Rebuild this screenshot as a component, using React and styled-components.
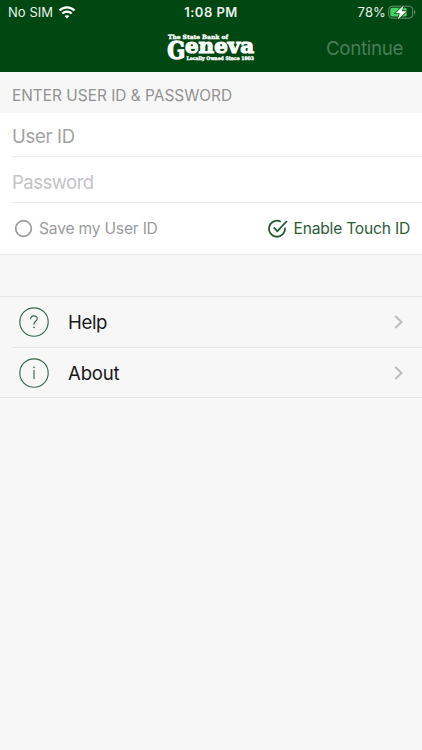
import React from 'react';
import styled, { createGlobalStyle } from 'styled-components';

const GlobalStyle = createGlobalStyle`
  * { box-sizing: border-box; }
  body { margin: 0; background: #f7f7f7; font-family: Inter, "Liberation Sans", sans-serif; }
`;

const Screen = styled.main`
  display: flex;
  flex-direction: column;
  width: 100%;
  max-width: 422px;
  height: 750px;
  background: #f7f7f7;
  overflow: hidden;
`;

const Header = styled.header`
  height: 72px;
  background: #004712;
  color: #fff;
`;

const StatusBar = styled.div`
  display: grid;
  grid-template-columns: 1fr auto 1fr;
  align-items: center;
  height: 24px;
  padding: 0 6px 0 8px;
  font-size: 13px;
  line-height: 24px;
  color: #e9f1ea;
`;

const StatusGroup = styled.div`
  display: flex;
  align-items: center;
  justify-content: ${(p) => (p.$end ? 'flex-end' : 'flex-start')};
  gap: ${(p) => (p.$end ? '2px' : '5px')};
  letter-spacing: ${(p) => (p.$end ? '0.15px' : '0.05px')};
`;

const Clock = styled.span`
  font-weight: 600;
  letter-spacing: 0.45px;
  margin-right: 2px;
`;

const NavBar = styled.nav`
  display: grid;
  grid-template-columns: 1fr 90px 1fr;
  align-items: center;
  height: 48px;
  padding-right: 19px;
  padding-left: 19px;
`;

const ContinueButton = styled.button`
  grid-column: 3;
  justify-self: end;
  border: 0;
  padding: 1px 0 0;
  background: none;
  font: 400 18.8px/24px Inter, sans-serif;
  letter-spacing: -0.35px;
  color: #4c7d58;
`;

const Logo = styled.svg`
  grid-column: 2;
  display: block;
`;

const SectionTitle = styled.h1`
  margin: 0;
  height: 41px;
  padding: 4px 12px 0;
  font-size: 15.4px;
  font-weight: 400;
  line-height: 39px;
  letter-spacing: 0.01px;
  color: #929292;
`;

const Form = styled.form`
  background: #fff;
  border-bottom: 1px solid #e6e6e6;
`;

const Field = styled.input`
  display: block;
  width: calc(100% - 12px);
  height: ${(p) => p.$height}px;
  margin-left: 12px;
  padding: ${(p) => p.$top}px 0 0;
  border: 0;
  border-bottom: 1px solid #e9e9e9;
  border-radius: 0;
  outline: 0;
  background: none;
  font: 400 18.5px/24px Inter, sans-serif;
  letter-spacing: ${(p) => p.$tracking}px;
  &::placeholder { color: ${(p) => p.$tone}; opacity: 1; }
`;

const Options = styled.div`
  display: flex;
  justify-content: space-between;
  height: 51px;
  padding: 0 12px 0 14px;
`;

const Option = styled.label`
  display: flex;
  align-items: center;
  gap: ${(p) => (p.$on ? '5px' : '6px')};
  font-size: 15.6px;
  letter-spacing: -0.2px;
  color: ${(p) => (p.$on ? '#2e5c39' : '#9b9b9b')};
`;

const Menu = styled.ul`
  margin: 41px 0 0;
  padding: 0;
  list-style: none;
  border-top: 1px solid #e5e5e5;
  border-bottom: 1px solid #e5e5e5;
`;

const MenuItem = styled.li`
  display: flex;
  align-items: center;
  height: 50px;
  margin-left: 12px;
  padding: 0 18px 0 7px;
  border-top: ${(p) => (p.$divided ? '1px solid #e5e5e5' : '0')};
`;

const MenuLabel = styled.span`
  flex: 1;
  margin-left: 19px;
  font-size: 18.6px;
  line-height: 24px;
  letter-spacing: ${(p) => p.$tracking}px;
  color: #191919;
`;

const Wifi = () => (
  <svg width="18" height="13" viewBox="0 0 17 13" fill="none" stroke="#fff" strokeWidth="2.3">
    <path d="M1 4.5C5.1.2 11.9.2 16 4.5" />
    <path d="M3.8 7.5c2.6-2.5 6.8-2.5 9.4 0" />
    <path d="M8.5 12.6 6.1 10.1c1.4-1.2 3.4-1.2 4.8 0Z" fill="#fff" stroke="none" />
  </svg>
);

const Battery = () => (
  <svg width="28" height="15" viewBox="0 0 28 15">
    <rect x=".7" y="1.2" width="24" height="12" rx="3.4" fill="none" stroke="#6c9275" />
    <path d="M26.2 5.1v4.2c1.6-.5 1.6-3.7 0-4.2Z" fill="#6c9275" />
    <rect x="2.3" y="2.8" width="16.5" height="8.8" rx="2" fill="#42d45d" />
    <path d="M15.8.2 7.3 8.2h4.5l-2 6.2 8.9-8.2h-4.8Z" fill="#fff" stroke="#004712" strokeWidth="1.4" paintOrder="stroke" />
  </svg>
);

const BankLogo = () => (
  <Logo width="90" height="32" viewBox="0 0 90 32" fill="#fff" stroke="#fff" fontFamily="'DejaVu Serif', serif" fontWeight="700" role="img" aria-label="The State Bank of Geneva">
    <text x="2" y="7" fontSize="5.8" strokeWidth=".35" textLength="60" lengthAdjust="spacingAndGlyphs">The State Bank of</text>
    <text x="1.2" y="26.9" fontSize="24" strokeWidth="1.3" textLength="18" lengthAdjust="spacingAndGlyphs">G</text>
    <text x="19" y="21.4" fontSize="20.5" strokeWidth="1.2" textLength="69" lengthAdjust="spacingAndGlyphs">eneva</text>
    <text x="20.5" y="28.2" fontSize="4.8" strokeWidth=".4" textLength="67.5" lengthAdjust="spacingAndGlyphs">Locally Owned Since 1903</text>
  </Logo>
);

const EmptyCircle = () => (
  <svg width="19" height="19" viewBox="0 0 19 19" fill="none" stroke="#999" strokeWidth="1.7">
    <circle cx="9.5" cy="9.5" r="7.8" />
  </svg>
);

const CheckedCircle = () => (
  <svg width="21" height="20" viewBox="0 0 21 20" fill="none" stroke="#245b32" strokeWidth="1.8">
    <path d="M13.8 2.7A8 8 0 1 0 17.9 8.6" />
    <path d="m6.7 8.4 3.7 3.7L19.9 2" />
  </svg>
);

const CircleGlyph = ({ kind }) => (
  <svg width="30" height="30" viewBox="0 0 30 30" fill="none" stroke="#37684a" strokeWidth="1.15">
    <circle cx="15" cy="15" r="14.2" />
    {kind === 'help' ? (
      <>
        <path d="M11.6 12.2c0-2.1 1.2-3.4 3.3-3.4s3.3 1.2 3.3 3c0 2.4-3.2 2.6-3.2 5v1" />
        <circle cx="15" cy="20.4" r=".8" fill="#37684a" stroke="none" />
      </>
    ) : (
      <>
        <path d="M15 12.1v8.9" />
        <circle cx="15" cy="9.4" r=".8" fill="#37684a" stroke="none" />
      </>
    )}
  </svg>
);

const Chevron = () => (
  <svg width="10" height="14" viewBox="0 0 10 14" fill="none" stroke="#bcbcbc" strokeWidth="2">
    <path d="m1.3 1 6.2 6-6.2 6" />
  </svg>
);

export default function App() {
  return (
    <>
      <GlobalStyle />
      <Screen>
        <Header>
          <StatusBar>
            <StatusGroup>No SIM <Wifi /></StatusGroup>
            <Clock>1:08 PM</Clock>
            <StatusGroup $end>78% <Battery /></StatusGroup>
          </StatusBar>
          <NavBar>
            <BankLogo />
            <ContinueButton type="button">Continue</ContinueButton>
          </NavBar>
        </Header>
        <SectionTitle>ENTER USER ID &amp; PASSWORD</SectionTitle>
        <Form>
          <Field $height={44} $top={3} $tracking={-0.3} $tone="#a2a2a2" placeholder="User ID" />
          <Field $height={46} $top={5} $tracking={-0.5} $tone="#c3c3c5" type="password" placeholder="Password" />
          <Options>
            <Option><EmptyCircle />Save my User ID</Option>
            <Option $on><CheckedCircle />Enable Touch ID</Option>
          </Options>
        </Form>
        <Menu>
          <MenuItem><CircleGlyph kind="help" /><MenuLabel $tracking={-0.35}>Help</MenuLabel><Chevron /></MenuItem>
          <MenuItem $divided><CircleGlyph kind="about" /><MenuLabel $tracking={-0.2}>About</MenuLabel><Chevron /></MenuItem>
        </Menu>
      </Screen>
    </>
  );
}
